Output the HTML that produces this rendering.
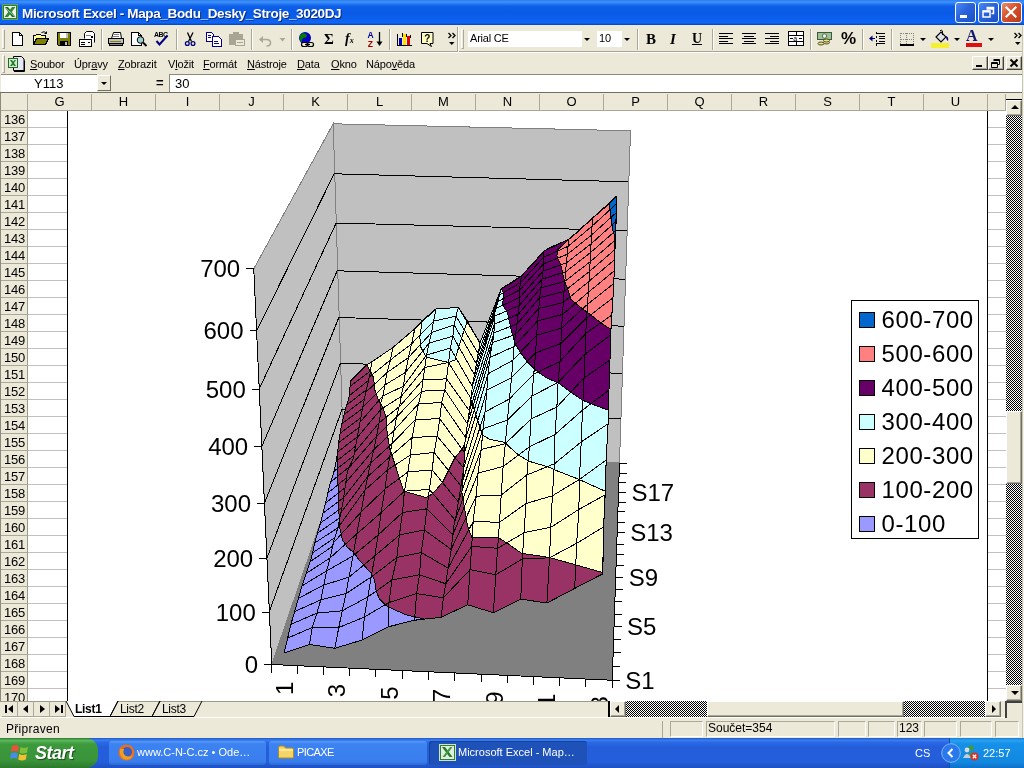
<!DOCTYPE html>
<html lang="cs"><head><meta charset="utf-8"><title>Microsoft Excel - Mapa_Bodu_Desky_Stroje_3020DJ</title>
<style>
html,body{margin:0;padding:0;}
body{width:1024px;height:768px;overflow:hidden;position:relative;background:#ece9d8;font-family:"Liberation Sans","DejaVu Sans",sans-serif;font-size:11px;color:#000;}
div,span{box-sizing:border-box;}
.abs{position:absolute;}
#title{position:absolute;left:0;top:0;width:1024px;height:25px;background:linear-gradient(180deg,#2a7cf0 0%,#3f92fb 8%,#2378f0 16%,#0c5ee8 26%,#0a5ae6 50%,#0c60ee 78%,#1066f5 90%,#0a52d8 96%,#063fb8 100%);}
#title .t{position:absolute;left:22px;top:6px;font-weight:bold;font-size:13.5px;color:#fff;white-space:nowrap;text-shadow:1px 1px 0 #0a2a7a;letter-spacing:-0.36px;}
#tb1{position:absolute;left:0;top:26px;width:1024px;height:26px;background:#ece9d8;border-bottom:1px solid #a8a594;}
#menu{position:absolute;left:0;top:52px;width:1024px;height:23px;background:#ece9d8;border-top:1px solid #fff;}
#menu .m{position:absolute;top:5px;font-size:11px;white-space:nowrap;letter-spacing:-0.15px;}
#fbar{position:absolute;left:0;top:74px;width:1024px;height:18px;background:#ece9d8;}
#colhdr{position:absolute;left:0;top:92px;width:1024px;height:19px;background:#ece9d8;border-top:1px solid #716f64;}
.ch{position:absolute;top:1px;height:17px;width:64px;border-right:1px solid #aca899;border-bottom:1px solid #aca899;text-align:center;font-size:13px;line-height:16px;background:#ece9d8;}
#rowhdr{position:absolute;left:0;top:111px;width:28px;height:590px;overflow:hidden;background:#ece9d8;}
.rh{position:absolute;left:1px;width:27px;height:17px;margin-top:-111px;border-right:1px solid #9d9a8a;border-bottom:1px solid #aca899;padding-left:1px;font-size:13px;line-height:17px;text-align:center;letter-spacing:-0.3px;}
#sheet{position:absolute;left:28px;top:111px;width:978px;height:590px;background:#fff;overflow:hidden;}
.wb{position:absolute;top:2px;width:21px;height:21px;border:1px solid #fff;border-radius:3px;background:linear-gradient(135deg,#4a8af5 0%,#2a63dc 45%,#1c4fc6 100%);}
.wb svg{position:absolute;left:-1px;top:-1px;}
.wb.wc{background:linear-gradient(135deg,#e8906e 0%,#d6502c 45%,#b93a18 100%);}
.grip{position:absolute;top:3px;width:3px;height:20px;border:1px solid;border-color:#fff #aca899 #aca899 #fff;}
.sep{position:absolute;top:3px;width:2px;height:21px;border-left:1px solid #aca899;border-right:1px solid #fff;}
.dd{position:absolute;top:12px;width:0;height:0;border:3px solid transparent;border-top:3px solid #000;border-bottom:none;}
.mdi{position:absolute;top:3px;width:16px;height:14px;background:#ece9d8;border:1px solid;border-color:#fff #404040 #404040 #fff;box-shadow:inset -1px -1px 0 #aca899;}
#vscroll{position:absolute;left:1006px;top:99px;width:16px;height:602px;background:repeating-conic-gradient(#000 0% 25%,#fff 0% 50%) 0 0/2px 2px;}
.dith{background:repeating-conic-gradient(#000 0% 25%,#fff 0% 50%) 0 0/2px 2px;}
.sbtn{position:absolute;width:16px;background:#ece9d8;border:1px solid;border-color:#fff #716f64 #716f64 #fff;box-shadow:inset -1px -1px 0 #aca899;}
#tabbar{position:absolute;left:0;top:701px;width:1024px;height:17px;background:#ece9d8;border-bottom:1px solid #fff;}
.nb{position:absolute;top:0;width:16px;height:16px;border-right:1px solid #aca899;border-bottom:1px solid #aca899;}
#status{position:absolute;left:0;top:719px;width:1024px;height:19px;background:#ece9d8;}
.sb{position:absolute;top:2px;height:16px;border:1px solid;border-color:#aca899 #fff #fff #aca899;font-size:12px;line-height:13px;padding-left:1px;white-space:nowrap;}
#taskbar{position:absolute;left:0;top:738px;width:1024px;height:30px;background:linear-gradient(180deg,#1f55c6 0%,#3a80f0 7%,#2a6ae6 14%,#245edb 30%,#245edb 80%,#1d4fc0 100%);}
#start{position:absolute;left:0;top:0;width:98px;height:30px;border-radius:0 12px 12px 0;background:linear-gradient(180deg,#2e7a2e 0%,#5cb85c 8%,#3c9a3c 20%,#3a933a 75%,#2a7a2a 100%);}
#start span{position:absolute;left:35px;top:4px;color:#fff;font:italic bold 18px "Liberation Sans",sans-serif;line-height:22px;text-shadow:1px 1px 1px #1a4a1a;letter-spacing:-0.5px;}
.tbtn{position:absolute;top:3px;height:24px;border-radius:3px;background:linear-gradient(180deg,#5a9af8 0%,#3c82f0 12%,#3a7eee 85%,#2a68d8 100%);}
.tbtn span{position:absolute;top:5px;color:#fff;font-size:11px;line-height:13px;white-space:nowrap;}
.tbtn.act{background:#1e52b8;box-shadow:inset 1px 1px 1px #16409a;}
#tray{position:absolute;left:949px;top:0;width:75px;height:30px;background:linear-gradient(180deg,#1a80d8 0%,#28a0f0 8%,#1590e8 20%,#1288e0 80%,#0e70c8 100%);border-left:1px solid #0a50a8;}

#root{position:absolute;left:0;top:0;width:1024px;height:768px;will-change:transform;overflow:hidden;}

</style></head>
<body>
<div id="root">
<div id="title">
<svg class="abs" style="left:2px;top:4px" width="16" height="16" viewBox="0 0 16 16"><rect x="0" y="0" width="16" height="16" fill="#2d7d33"/><rect x="0.500" y="0.500" width="15" height="15" fill="none" stroke="#9cc79c" stroke-dasharray="1 1"/><rect x="2" y="2" width="12" height="12" fill="#eef5ea"/><path d="M2.500 3 L6 3 L13.500 13 L10 13 Z" fill="#1d6f27"/><path d="M10 3 L13.500 3 L6 13 L2.500 13 Z" fill="#2f8a3a"/><path d="M3 3.500 L13 12.500" stroke="#cfe6cf" stroke-width="0.800"/></svg>
<span class="t">Microsoft Excel - Mapa_Bodu_Desky_Stroje_3020DJ</span>
<div class="wb" style="left:955px"><svg width="21" height="21"><rect x="5" y="13" width="7" height="3" fill="#fff"/></svg></div>
<div class="wb" style="left:978px"><svg width="21" height="21"><path d="M8.5 5.500 h7 v6 h-2 M8.500 7 h7" stroke="#fff" stroke-width="1.500" fill="none"/><rect x="5" y="9" width="7" height="6" fill="none" stroke="#fff" stroke-width="1.500"/><path d="M5 9.500 h7" stroke="#fff" stroke-width="2"/></svg></div>
<div class="wb wc" style="left:1001px"><svg width="21" height="21"><path d="M5.500 5.500 L14.500 14.500 M14.500 5.500 L5.500 14.500" stroke="#fff" stroke-width="2.200" stroke-linecap="square"/></svg></div>
</div>
<div id="tb1">
<div class="grip" style="left:2px"></div>
<div class="grip" style="left:461px"></div>
<div class="sep" style="left:101px"></div><div class="sep" style="left:176px"></div><div class="sep" style="left:251px"></div><div class="sep" style="left:291px"></div><div class="sep" style="left:389px"></div><div class="sep" style="left:457px;top:1px;height:25px"></div>
<div class="sep" style="left:637px"></div><div class="sep" style="left:712px"></div><div class="sep" style="left:810px"></div><div class="sep" style="left:862px"></div><div class="sep" style="left:891px"></div>
<svg class="abs" style="left:0;top:0" width="1024" height="26" viewBox="0 26 1024 26" shape-rendering="crispEdges">
<!-- new -->
<path d="M12.500 32.500h7l3 3v9.500h-10z" fill="#fff" stroke="#000"/><path d="M19.500 32.500v3h3" fill="none" stroke="#000"/>
<!-- open -->
<path d="M33.500 44.500v-9h2l1-1h4l1 1h4v3" fill="#ffff99" stroke="#000"/><path d="M33.500 44.500l3-6h12l-3 6z" fill="#808000" stroke="#000"/><path d="M41.500 32.500q3-2 5 1m0-2v2h-2" fill="none" stroke="#000" shape-rendering="auto"/>
<!-- save -->
<path d="M57.500 32.500h13v13h-12l-1-1z" fill="#808000" stroke="#000"/><rect x="60" y="33" width="8" height="5" fill="#fff"/><rect x="66" y="33" width="2" height="5" fill="#c0c0c0"/><rect x="60" y="41" width="8" height="4" fill="#000"/><rect x="65" y="42" width="2" height="3" fill="#c0c0c0"/>
<!-- mail -->
<path d="M84.500 38.500v-5l2-2h6l2 2v9" fill="#fff" stroke="#000" shape-rendering="auto"/><rect x="79.500" y="39.500" width="12" height="7" fill="#fff" stroke="#000"/><path d="M81 42h4m-4 2h4m3-2h2" stroke="#000"/><rect x="91" y="36" width="2" height="2" fill="#000"/><path d="M86 35h5" stroke="#808080"/>
<!-- print -->
<path d="M111.500 38.500l2-6h7l1 6" fill="#fff" stroke="#000" shape-rendering="auto"/><path d="M108.500 38.500h15v5h-15z" fill="#c0c0c0" stroke="#000"/><path d="M109.500 43.500h13v2h-13z" fill="#808080" stroke="#000"/><path d="M110 41h11" stroke="#808000"/><path d="M114 34.500h5m-6 2h6" stroke="#808080"/>
<!-- preview -->
<path d="M131.500 32.500h7l3 3v9.500h-10z" fill="#fff" stroke="#000"/><path d="M138.500 32.500v3h3" fill="none" stroke="#000"/><circle cx="140.500" cy="40" r="3.300" fill="#9fd0d0" stroke="#000" shape-rendering="auto"/><path d="M143 42.500l3.500 3.500" stroke="#000" stroke-width="2" shape-rendering="auto"/>
<!-- spell -->
<text x="154" y="37" font-family="Liberation Sans,sans-serif" font-size="7" font-weight="bold" fill="#000" shape-rendering="auto" textLength="14">ABC</text><path d="M156.500 41l3 3.500l8-9" fill="none" stroke="#000080" stroke-width="2" shape-rendering="auto"/>
<!-- cut -->
<g shape-rendering="auto"><path d="M187.500 32.500l4 9M193 32.500l-4.500 9" stroke="#000" stroke-width="1.300" fill="none"/><circle cx="187.300" cy="43.500" r="1.900" fill="none" stroke="#000080" stroke-width="1.300"/><circle cx="193" cy="43.500" r="1.900" fill="none" stroke="#000080" stroke-width="1.300"/></g>
<!-- copy -->
<path d="M206.500 32.500h5l2 2v6.500h-7z" fill="#fff" stroke="#000080"/><path d="M212.500 36.500h6l3 3v6.500h-9z" fill="#fff" stroke="#000080"/><path d="M208 35h3m-3 2h3m3 4h4m-4 2h5" stroke="#000080"/>
<!-- paste (disabled) -->
<path d="M229.500 34.500h13v10h-13z" fill="#a8a595" stroke="#a8a595"/><rect x="233" y="32" width="6" height="3" fill="#a8a595"/><rect x="235.500" y="39.500" width="9" height="6" fill="#ece9d8" stroke="#a8a595"/><path d="M237 42h6" stroke="#a8a595"/>
<!-- undo (disabled) -->
<g shape-rendering="auto"><path d="M261 39.500h5.500q4 0 4 3.500q0 3-4 3" fill="none" stroke="#aca899" stroke-width="1.600"/><path d="M259 39.500l4-3.500v7z" fill="#aca899"/><path d="M279.500 38h6l-3 3.500z" fill="#aca899"/></g>
<!-- hyperlink -->
<g shape-rendering="auto"><circle cx="305" cy="38" r="6" fill="#0000c0"/><path d="M302 33.500q4-1 5 2q-1 3-4 2.500q-2 2-1 4q-2-1-2.500-4q0-3 2.500-4.500z" fill="#008000"/><rect x="301.500" y="42.500" width="6" height="4" rx="2" fill="#ece9d8" stroke="#000" stroke-width="1.200"/><rect x="307.500" y="42.500" width="6" height="4" rx="2" fill="#ece9d8" stroke="#000" stroke-width="1.200"/><path d="M305 44.500h5" stroke="#000" stroke-width="1.200"/></g>
<!-- sort -->
<g shape-rendering="auto"><text x="367.500" y="38" font-family="Liberation Sans,sans-serif" font-size="8.500" font-weight="bold" fill="#0000a0">A</text><text x="367.800" y="46.500" font-family="Liberation Sans,sans-serif" font-size="8.500" font-weight="bold" fill="#a00000">Z</text><path d="M379.500 32v11" stroke="#000" stroke-width="1.300"/><path d="M376.500 41.500h6l-3 4.500z" fill="#000"/></g>
<!-- chart wizard -->
<path d="M397.500 33.500v11.500h14" fill="none" stroke="#000"/><rect x="399" y="38" width="3" height="7" fill="#0000c0"/><rect x="403" y="34" width="3" height="11" fill="#ffe000"/><rect x="407" y="36" width="3" height="9" fill="#e00000"/><path d="M402.500 33v4m4-3v3m4-2v3" stroke="#000"/>
<!-- help -->
<g shape-rendering="auto"><path d="M421.500 32.500h11.500v11h-3l1.500 3l-4.500-3h-5.500z" fill="#ffffc0" stroke="#000"/><text x="424.300" y="42" font-family="Liberation Sans,sans-serif" font-size="10" font-weight="bold" fill="#000">?</text></g>
<!-- chevrons -->
<g shape-rendering="auto"><path d="M448.500 33l2.500 2.500l-2.500 2.500M452.500 33l2.500 2.500l-2.500 2.500" fill="none" stroke="#000" stroke-width="1.300"/><path d="M449 42h5.500l-2.750 3z" fill="#000"/>
<path d="M1014.500 33l2.500 2.500l-2.500 2.500M1018.500 33l2.500 2.500l-2.500 2.500" fill="none" stroke="#000" stroke-width="1.300"/><path d="M1015 42h5.500l-2.750 3z" fill="#000"/></g>
<!-- align -->
<path d="M719 33.500h14m-14 2.500h9m-9 2.500h14m-14 2.500h9m-9 2.500h14" stroke="#000"/>
<path d="M742 33.500h14m-12 2.500h10m-12 2.500h14m-12 2.500h10m-12 2.500h14" stroke="#000"/>
<path d="M765 33.500h14m-9 2.500h9m-14 2.500h14m-9 2.500h9m-14 2.500h14" stroke="#000"/>
<!-- merge -->
<rect x="788.500" y="31.500" width="15" height="14" fill="#fff" stroke="#000"/><path d="M788 35.500h16m-16 6h16M796 31v4m0 7v4" stroke="#000"/><path d="M790 38.500h3m6 0h3" stroke="#000"/><text x="793.300" y="41" font-family="Liberation Sans,sans-serif" font-size="7" fill="#000" shape-rendering="auto">a</text>
<!-- currency -->
<g shape-rendering="auto"><rect x="817.500" y="32.500" width="14" height="7" fill="#9dc09a" stroke="#3a5a3a"/><circle cx="824.500" cy="36" r="2.200" fill="#e8f0e0" stroke="#3a5a3a" stroke-width="0.800"/><ellipse cx="821" cy="43.500" rx="3" ry="1.500" fill="#e8e0a0" stroke="#404000" stroke-width="0.900"/><ellipse cx="826.500" cy="42.500" rx="3" ry="1.500" fill="#e8e0a0" stroke="#404000" stroke-width="0.900"/><ellipse cx="826.500" cy="40.500" rx="3" ry="1.500" fill="#e8e0a0" stroke="#404000" stroke-width="0.900"/></g>
<!-- decrease indent -->
<path d="M876 33.500h9m-6 2.500h6m-6 2.500h6m-6 2.500h6m-9 2.500h9" stroke="#000"/><path d="M876.500 32v2m0 2v2m0 2v2m0 2v2" stroke="#000"/><path d="M869 38.500l3.500-3v6z" fill="#000080" shape-rendering="auto"/><path d="M872 38.500h3" stroke="#000080"/>
<!-- borders -->
<path d="M900.500 33.500h13M900.500 39.500h13M900.500 33v11M906.500 33v11M913.500 33v11" stroke="#808080" stroke-dasharray="1 1"/><path d="M900 45h14" stroke="#000" stroke-width="2"/>
<!-- bucket -->
<g shape-rendering="auto"><path d="M936 37l5-5l5 5l-5 5z" fill="#e0e0e8" stroke="#000" stroke-width="1.100"/><path d="M940 31q1-2 2.500 0v4" fill="none" stroke="#000"/><path d="M946 36q3 1 2 5q-2-1-2-5z" fill="#000080"/></g>
</svg>

<div class="abs" style="left:468px;top:5px;width:114px;height:16px;background:#fff;font-size:11px;line-height:15px;padding-left:2px;letter-spacing:-0.2px">Arial CE</div>
<div class="dd" style="left:584px"></div>
<div class="abs" style="left:597px;top:5px;width:25px;height:16px;background:#fff;font-size:11px;line-height:15px;padding-left:2px">10</div>
<div class="dd" style="left:624px"></div>
<div class="abs" style="left:646px;top:4px;font:bold 15px 'Liberation Serif',serif;line-height:18px">B</div>
<div class="abs" style="left:670px;top:4px;font:italic bold 15px 'Liberation Serif',serif;line-height:18px">I</div>
<div class="abs" style="left:692px;top:4px;font:bold 14px 'Liberation Serif',serif;line-height:17px;border-bottom:1px solid #000;height:15px;">U</div>
<div class="abs" style="left:841px;top:3px;font:bold 17px 'Liberation Sans',sans-serif;line-height:20px;letter-spacing:-1px">%</div>
<div class="abs" style="left:324px;top:3px;font:bold 15px 'Liberation Serif','DejaVu Serif',serif;line-height:20px">&Sigma;</div>
<div class="abs" style="left:345px;top:4px;font:italic bold 14px 'Liberation Serif',serif;line-height:18px">f<span style="font-size:8px">x</span></div>
<div class="dd" style="left:920px"></div><div class="dd" style="left:954px"></div><div class="dd" style="left:988px"></div>
<div class="abs" style="left:931px;top:17px;width:18px;height:5px;background:#f5f032"></div>
<div class="abs" style="left:966px;top:17px;width:16px;height:4px;background:#e01010"></div>
<div class="abs" style="left:966px;top:2px;font:bold 16px 'Liberation Serif',serif;line-height:16px;color:#15156e">A</div>
</div>
<div id="menu">
<div class="grip" style="left:2px;top:2px;height:18px"></div>
<svg class="abs" style="left:8px;top:2px" width="17" height="17" viewBox="0 0 17 17"><path d="M5.500 1.500 h8 l2.500 2.500 v11.500 h-10.500z" fill="#e6e9f5" stroke="#000"/><path d="M6 16.500 h10.500 v-11" stroke="#000" fill="none"/><rect x="0.500" y="3.500" width="9" height="9" fill="#d5ead0" stroke="#1d6b25"/><path d="M2 5 L4 5 L8 11 L6 11Z M6.500 5 L8 5 L4 11 L2 11Z" fill="#1f7a2a"/></svg>
<span class="m" style="left:30px"><u>S</u>oubor</span>
<span class="m" style="left:74px">Úpr<u>a</u>vy</span>
<span class="m" style="left:118px"><u>Z</u>obrazit</span>
<span class="m" style="left:168px">V<u>l</u>ožit</span>
<span class="m" style="left:203px"><u>F</u>ormát</span>
<span class="m" style="left:247px"><u>N</u>ástroje</span>
<span class="m" style="left:297px"><u>D</u>ata</span>
<span class="m" style="left:331px"><u>O</u>kno</span>
<span class="m" style="left:366px">Nápo<u>v</u>ěda</span>
<div class="mdi" style="left:972px"><svg width="14" height="12"><rect x="3" y="8" width="6" height="2" fill="#000"/></svg></div>
<div class="mdi" style="left:988px"><svg width="14" height="12"><path d="M4.500 2.500 h6 v5 h-2 M4.500 3.500 h6" stroke="#000" fill="none"/><path d="M2.500 5.500 h6 v5 h-6z M2.500 6.500 h6" stroke="#000" fill="none"/></svg></div>
<div class="mdi" style="left:1006px"><svg width="14" height="12"><path d="M3.500 2.500 L10.500 9.500 M10.500 2.500 L3.500 9.500" stroke="#000" stroke-width="2"/></svg></div>
</div>
<div id="fbar">
<div class="abs" style="left:1px;top:0;width:96px;height:18px;background:#fff;border-top:1px solid #8d8a7c;font-size:13px;line-height:18px;padding-left:33px;">Y113</div>
<div class="abs" style="left:97px;top:1px;width:14px;height:16px;background:#ece9d8;border:1px solid;border-color:#fff #716f64 #716f64 #fff;"><div class="abs" style="left:3px;top:6px;border:3px solid transparent;border-top:3px solid #000;border-bottom:none;width:0;height:0"></div></div>
<div class="abs" style="left:156px;top:0;font:bold 13px 'Liberation Sans',sans-serif;line-height:17px">=</div>
<div class="abs" style="left:169px;top:0;width:855px;height:18px;background:#fff;border-top:1px solid #8d8a7c;border-left:1px solid #8d8a7c;font-size:13px;line-height:18px;padding-left:5px;">30</div>
</div>
<div id="colhdr"><div class="ch" style="left:28px">G</div><div class="ch" style="left:92px">H</div><div class="ch" style="left:156px">I</div><div class="ch" style="left:220px">J</div><div class="ch" style="left:284px">K</div><div class="ch" style="left:348px">L</div><div class="ch" style="left:412px">M</div><div class="ch" style="left:476px">N</div><div class="ch" style="left:540px">O</div><div class="ch" style="left:604px">P</div><div class="ch" style="left:668px">Q</div><div class="ch" style="left:732px">R</div><div class="ch" style="left:796px">S</div><div class="ch" style="left:860px">T</div><div class="ch" style="left:924px">U</div><div class="ch" style="left:988px;width:18px"></div><div class="ch" style="left:1px;width:27px"></div></div><div id="rowhdr"><div class="rh" style="top:111px">136</div><div class="rh" style="top:128px">137</div><div class="rh" style="top:145px">138</div><div class="rh" style="top:162px">139</div><div class="rh" style="top:179px">140</div><div class="rh" style="top:196px">141</div><div class="rh" style="top:213px">142</div><div class="rh" style="top:230px">143</div><div class="rh" style="top:247px">144</div><div class="rh" style="top:264px">145</div><div class="rh" style="top:281px">146</div><div class="rh" style="top:298px">147</div><div class="rh" style="top:315px">148</div><div class="rh" style="top:332px">149</div><div class="rh" style="top:349px">150</div><div class="rh" style="top:366px">151</div><div class="rh" style="top:383px">152</div><div class="rh" style="top:400px">153</div><div class="rh" style="top:417px">154</div><div class="rh" style="top:434px">155</div><div class="rh" style="top:451px">156</div><div class="rh" style="top:468px">157</div><div class="rh" style="top:485px">158</div><div class="rh" style="top:502px">159</div><div class="rh" style="top:519px">160</div><div class="rh" style="top:536px">161</div><div class="rh" style="top:553px">162</div><div class="rh" style="top:570px">163</div><div class="rh" style="top:587px">164</div><div class="rh" style="top:604px">165</div><div class="rh" style="top:621px">166</div><div class="rh" style="top:638px">167</div><div class="rh" style="top:655px">168</div><div class="rh" style="top:672px">169</div><div class="rh" style="top:689px">170</div></div><div class="abs" style="left:0;top:93px;width:1px;height:608px;background:#8d8a7c"></div><div id="sheet">
<div class="abs" style="left:0;top:0;width:39px;height:590px;background:repeating-linear-gradient(180deg,#fff 0,#fff 16px,#c0c0c0 16px,#c0c0c0 17px);"></div>
<div class="abs" style="left:960px;top:0;width:18px;height:590px;background:repeating-linear-gradient(180deg,#fff 0,#fff 16px,#c0c0c0 16px,#c0c0c0 17px);"></div>
<div class="abs" style="left:39px;top:0;width:921px;height:590px;background:#fff;border-left:1px solid #000;border-right:1px solid #000;"></div>
</div>
<div id="vscroll">
<div class="abs" style="left:0;top:0;width:16px;height:1px;background:#000"></div>
<div class="sbtn" style="left:0;top:1px;height:16px"><div class="abs" style="left:4px;top:4px;border:4px solid transparent;border-bottom:4px solid #000;border-top:none;width:0;height:0"></div></div>
<div class="sbtn" style="left:0;top:312px;height:73px"></div>
<div class="sbtn" style="left:0;top:586px;height:16px"><div class="abs" style="left:4px;top:5px;border:4px solid transparent;border-top:4px solid #000;border-bottom:none;width:0;height:0"></div></div>
</div>
<svg id="chart" width="1024" height="768" viewBox="0 0 1024 768" style="position:absolute;left:0;top:0;will-change:transform">
<defs><clipPath id="cs"><rect x="68" y="111" width="919" height="590"/></clipPath></defs>
<g clip-path="url(#cs)" shape-rendering="crispEdges" font-family="Liberation Sans, Arial, sans-serif" font-size="24" fill="#000">
<polygon points="271.8,664.5 612.2,680.2 619.5,463.0 343.5,455.0" fill="#808080"/>
<polygon points="333.2,123.8 630.5,130.8 619.5,463.0 343.5,455.0" fill="#c0c0c0" stroke="#808080" stroke-width="1"/>
<polygon points="333.2,123.8 253.8,268.8 271.8,664.5 343.5,455.0" fill="#c0c0c0" stroke="#808080" stroke-width="1"/>
<path d="M257.0 330.2L334.2 173.8L628.5 181.8M259.2 389.0L336.2 223.0L626.8 230.5M261.8 446.5L337.2 270.8L625.2 279.2M264.5 503.2L338.8 317.5L623.8 326.2M266.8 558.5L340.5 363.2L622.0 373.4M269.2 612.0L342.0 409.5L620.5 419.0" fill="none" stroke="#000" stroke-width="1"/>
<path d="M253.750 268.750L271.750 664.500" stroke="#000" stroke-width="1" fill="none"/>
<text x="240.2" y="277.4" text-anchor="end">700</text>
<text x="243.5" y="338.9" text-anchor="end">600</text>
<text x="245.8" y="397.7" text-anchor="end">500</text>
<text x="248.2" y="455.2" text-anchor="end">400</text>
<text x="251.0" y="511.9" text-anchor="end">300</text>
<text x="253.2" y="567.2" text-anchor="end">200</text>
<text x="255.8" y="620.7" text-anchor="end">100</text>
<text x="258.2" y="673.2" text-anchor="end">0</text>
<path d="M246.2 268.8H253.8M249.5 330.2H257.0M251.8 389.0H259.2M254.2 446.5H261.8M257.0 503.2H264.5M259.2 558.5H266.8M261.8 612.0H269.2M264.2 664.5H271.8" stroke="#000" stroke-width="1" fill="none"/>
<polygon points="284.1,653.0 309.4,644.4 334.8,648.3 362.2,640.0 388.0,626.9 414.5,620.2 441.1,617.3 467.7,604.8 493.4,612.7 520.8,599.1 546.9,603.0 574.7,588.4 602.8,573.8 603.6,526.9 605.2,494.8 606.2,460.0 608.1,423.8 609.0,390.0 610.0,360.0 610.6,335.0 611.9,315.0 612.9,298.0 613.8,283.5 614.1,271.0 614.4,259.8 615.0,249.5 615.5,239.8 615.8,230.5 616.0,221.5 616.2,212.7 616.3,204.0 616.5,196.4 616.2,196.2 609.4,203.8 592.5,218.1 580.0,230.0 568.8,239.4 550.0,247.5 544.0,251.0 533.0,264.0 521.4,276.0 512.5,282.5 501.2,288.8 480.0,343.0 473.8,332.5 467.5,321.2 458.3,307.5 436.0,308.8 422.2,320.6 414.8,328.8 392.9,347.5 371.6,361.9 366.6,365.0 350.4,381.2 349.4,396.0 345.5,409.0 341.6,424.7 339.0,440.3 337.4,454.0 334.5,470.0 329.6,485.3 325.7,502.5 321.0,521.2 315.5,540.0 310.8,560.0 302.0,586.0 291.0,624.0 284.1,653.0" fill="#993366" stroke="#000" stroke-width="1" stroke-linejoin="round"/>
<polygon points="337.4,455.0 334.5,470.0 329.6,485.3 325.7,502.5 321.0,521.2 315.5,540.0 310.8,560.0 302.0,586.0 291.0,624.0 284.1,653.0 309.4,644.4 334.8,648.3 362.2,640.0 388.0,626.9 414.5,620.2 425.0,619.3 406.0,614.7 395.0,610.0 385.6,605.3 379.4,599.0 376.2,591.2 374.7,580.3 371.6,574.0 363.8,565.0 360.0,561.2 353.8,552.5 347.5,547.5 342.5,540.0 339.4,526.2 338.8,507.5 338.1,486.2 337.5,470.0" fill="#9999ff" stroke="#000" stroke-width="1" stroke-linejoin="round"/>
<polygon points="366.6,365.0 369.8,370.0 373.5,377.5 374.8,390.0 378.5,400.0 383.5,408.8 386.0,417.5 387.2,433.8 389.8,448.8 393.5,460.0 397.2,471.2 403.8,491.2 426.2,497.5 432.5,493.8 442.5,482.5 448.8,470.0 455.0,457.5 462.5,448.8 465.0,442.5 466.9,427.5 470.6,402.5 475.0,372.5 480.0,343.0 473.8,332.5 467.5,321.2 458.3,307.5 436.0,308.8 422.2,320.6 414.8,328.8 392.9,347.5 371.6,361.9" fill="#ffffcc" stroke="#000" stroke-width="1" stroke-linejoin="round"/>
<polygon points="422.2,320.6 436.0,308.8 458.3,307.5 467.5,321.2 462.5,335.0 457.5,351.2 455.0,360.0 448.5,362.5 426.0,357.0 421.0,347.5 419.8,337.5" fill="#ccffff" stroke="#000" stroke-width="1" stroke-linejoin="round"/>
<polygon points="465.0,442.5 463.8,467.5 461.9,492.5 465.0,511.2 467.5,526.0 471.7,537.1 498.5,537.7 507.7,543.5 521.5,553.3 549.5,557.5 602.7,572.5 603.6,526.9 605.2,491.2 577.5,478.8 555.0,470.0 550.0,467.5 528.8,461.2 518.5,455.0 510.0,447.5 505.0,442.5 490.0,439.4 482.5,435.0 470.9,400.0 468.8,416.0 466.9,428.0 466.2,436.0" fill="#ffffcc" stroke="#000" stroke-width="1" stroke-linejoin="round"/>
<polygon points="482.5,435.0 490.0,439.4 505.0,442.5 510.0,447.5 518.5,455.0 528.8,461.2 550.0,467.5 555.0,470.0 577.5,478.8 605.2,491.2 606.2,460.0 608.1,423.8 608.3,410.2 595.0,405.2 582.5,400.2 570.0,391.5 558.1,382.8 546.2,377.8 535.6,370.2 527.5,362.0 520.0,352.0 515.0,343.2 511.2,330.0 507.5,312.5 502.5,305.0 503.8,293.8 501.2,288.8 480.0,343.0 477.5,357.5 475.0,372.5 472.5,385.0 470.9,400.0" fill="#ccffff" stroke="#000" stroke-width="1" stroke-linejoin="round"/>
<polygon points="608.3,410.2 595.0,405.2 582.5,400.2 570.0,391.5 558.1,382.8 546.2,377.8 535.6,370.2 527.5,362.0 520.0,352.0 515.0,343.2 511.2,330.0 507.5,312.5 502.5,305.0 503.8,293.8 501.2,288.8 512.5,282.5 521.4,276.0 533.0,264.0 544.0,251.0 550.0,247.5 568.8,239.4 557.5,250.0 556.9,256.0 561.2,266.2 563.0,275.0 565.2,283.0 567.5,288.0 570.6,299.0 579.0,306.0 594.0,317.5 602.5,324.0 611.0,329.5 610.0,360.0 609.0,390.0" fill="#660066" stroke="#000" stroke-width="1" stroke-linejoin="round"/>
<polygon points="611.0,329.5 602.5,324.0 594.0,317.5 579.0,306.0 570.6,299.0 567.5,288.0 565.2,283.0 563.0,275.0 561.2,266.2 556.9,256.0 557.5,250.0 568.8,239.4 580.0,230.0 592.5,218.1 609.4,203.8 610.6,215.0 612.5,228.8 615.0,237.5 614.4,260.0 613.8,286.0 612.8,300.0" fill="#ff8080" stroke="#000" stroke-width="1" stroke-linejoin="round"/>
<polygon points="616.2,196.2 609.4,203.8 610.6,215.0 612.5,228.8 615.0,237.5 615.8,230.0 616.9,200.0" fill="#0066cc" stroke="#000" stroke-width="1" stroke-linejoin="round"/>
<path d="M284.1 653.0L291.0 624.0L302.0 586.0L310.8 560.0L315.5 540.0L321.0 521.2L325.7 502.5L329.6 485.3L334.5 470.0L337.4 454.0L339.0 440.3L341.6 424.7L345.5 409.0L349.4 396.0L350.4 381.2M309.4 644.4L312.2 627.5L316.9 613.1L320.8 599.8L323.9 585.0L326.6 570.9L329.6 560.0L334.0 540.0L338.0 527.5L343.0 502.5L347.5 471.0L353.3 458.5L357.2 437.7L361.2 415.6L365.0 396.0L370.3 372.6L371.6 361.9M334.8 648.3L338.8 627.5L342.2 610.8L346.1 593.6L348.9 577.2L351.2 566.0L353.8 551.2L357.5 530.0L361.2 511.2L365.0 490.0L369.0 470.0L374.2 448.0L378.0 428.6L380.7 413.0L381.0 402.4L383.5 393.5L385.6 380.0L387.2 372.5L390.4 360.0L392.9 347.5M362.2 640.0L364.5 615.9L367.7 597.5L370.8 579.5L373.1 566.0L375.0 555.0L378.1 535.0L381.2 512.5L385.0 488.8L387.5 470.0L391.6 445.0L394.2 430.3L396.5 417.0L400.0 403.7L402.0 392.0L403.5 386.2L405.4 372.5L408.5 357.5L411.6 343.8L414.8 328.8M388.0 626.9L389.0 602.5L391.9 580.0L396.9 557.5L399.4 535.0L402.5 512.5L404.4 491.2L407.9 471.9L410.4 455.0L412.2 437.5L415.4 419.4L418.5 403.8L421.6 391.2L422.9 380.0L424.8 367.5L426.6 355.0L429.1 343.1L431.6 332.5L433.5 321.2L436.0 308.8M414.5 620.2L416.6 593.6L419.5 574.8L421.2 552.5L424.4 530.0L426.9 508.8L429.4 489.4L432.2 470.0L434.1 452.5L437.2 436.2L439.8 418.8L441.6 402.5L444.8 390.0L446.6 378.8L448.5 362.5L450.4 348.1L452.9 336.2L454.1 325.0L456.0 316.2L458.3 307.5M441.1 617.3L443.4 597.8L445.8 583.8L448.1 568.1L451.2 549.4L453.8 526.0L456.2 515.0L460.0 492.5L463.8 467.5L465.0 442.5L466.2 436.0L466.9 427.5L468.8 416.2L470.6 402.5L472.5 385.0L475.0 372.5L477.5 357.5L480.0 343.0M467.7 604.8L470.0 569.7L471.7 546.4L473.2 521.0L476.2 496.2L478.1 473.1L481.2 449.4L483.1 428.8L485.0 412.0L486.9 390.0L488.1 373.8L490.0 357.5L492.5 342.5L493.8 335.0L495.0 312.5L501.2 288.8M493.4 612.7L495.8 574.7L497.6 548.3L499.5 522.3L501.2 495.0L503.1 466.5L505.3 443.8L507.5 420.0L509.4 399.0L511.5 377.8L513.0 360.2L514.0 346.5L515.5 334.6L517.5 320.0L519.8 300.0L520.0 286.2L521.4 276.0M520.8 599.1L522.3 559.0L524.0 532.7L526.0 503.5L526.9 475.0L529.4 446.9L531.0 419.0L531.9 396.0L533.8 374.0L535.6 352.8L537.5 322.5L540.0 295.0L543.1 270.0L544.0 251.0M546.9 603.0L549.5 557.8L550.8 527.3L552.4 495.8L554.4 463.8L555.0 434.4L556.9 407.0L558.1 382.5L560.0 361.5L561.9 324.0L564.4 286.0L566.2 265.0L568.8 239.4M574.7 588.4L576.7 543.3L578.9 509.4L579.4 479.5L581.2 441.9L582.5 410.2L584.4 371.5L586.2 324.0L588.8 286.0L590.6 252.5L592.5 218.1M602.8 573.8L603.6 526.9L605.2 494.8L606.2 460.0L608.1 423.8L609.0 390.0L610.0 360.0L610.6 335.0L612.8 300.0L613.8 286.0L614.4 260.0L615.6 237.5L616.5 197.0M309.4 644.4L334.8 648.3L362.2 640.0L388.0 626.9L414.5 620.2L441.1 617.3L467.7 604.8L493.4 612.7L520.8 599.1L546.9 603.0L574.7 588.4L602.8 573.8M312.2 627.5L338.8 627.5L364.4 617.0L389.0 602.5L416.6 593.6L443.4 597.8L470.0 569.7L495.8 574.7L522.3 559.0L549.5 557.8L576.7 543.3L603.6 526.9M316.9 613.1L342.2 610.8L367.8 597.0L391.9 580.0L419.5 574.8L445.8 583.8L471.7 546.4L497.6 548.3L524.0 532.7L550.8 527.3L578.9 509.4L605.2 494.8M320.8 599.8L346.1 593.6L371.2 577.0L396.9 557.5L421.2 552.5L448.1 568.1L473.2 521.5L499.5 522.3L526.0 503.5L552.4 495.8L579.4 479.5L606.2 460.0M323.9 585.0L348.9 577.2L374.8 556.0L399.4 535.0L424.4 530.0L451.2 549.4L476.2 496.2L501.2 495.0L526.9 475.0L554.4 463.8L581.2 441.9L608.1 423.8M326.6 570.9L352.9 556.0L378.1 535.0L402.5 512.5L426.9 508.8L452.8 535.0L478.1 473.1L503.1 466.5L529.4 446.9L555.0 434.4L582.5 410.2L609.0 390.0M330.0 558.0L356.8 534.0L381.2 512.5L404.4 491.2L429.4 489.4L455.1 520.0L481.2 449.4L505.3 443.8L531.0 419.0L556.9 407.0L584.1 377.8L610.0 360.0M333.4 542.9L361.1 512.0L385.0 489.0L407.9 471.9L432.2 470.0L458.4 502.0L483.1 428.8L507.5 420.0L531.9 396.0L558.1 382.5L585.1 354.0L610.6 335.0M337.9 527.8L365.0 490.0L387.5 470.0L410.4 455.0L434.1 452.5L461.0 486.0L485.0 412.0L509.4 399.0L533.8 374.0L560.0 361.5L585.9 333.3L611.9 315.0M340.9 512.8L367.7 476.6L389.6 457.0L412.2 437.5L437.2 436.2L463.7 468.0L486.9 390.0L511.5 377.8L535.6 352.8L560.9 343.5L586.7 317.8L612.9 298.0M343.7 497.7L370.6 463.1L391.8 444.0L415.4 419.4L439.8 418.8L464.5 452.5L488.1 373.8L513.0 360.2L536.7 335.2L561.7 328.0L587.5 304.3L613.8 283.5M345.8 482.6L373.8 449.7L394.2 430.3L418.5 403.8L441.6 402.5L465.9 438.0L490.0 357.5L514.0 346.5L537.7 320.8L562.5 314.5L588.3 292.3L614.1 271.0M349.1 467.5L376.5 436.3L396.5 417.0L421.6 391.2L444.8 390.0L467.5 424.0L492.5 342.5L515.5 334.6L538.8 308.4L563.3 302.5L589.0 281.3L614.4 259.8M354.5 452.4L379.0 422.9L399.2 406.8L422.9 380.0L446.6 378.8L469.5 411.0L493.9 332.9L517.0 324.0L539.8 297.6L564.0 291.5L589.6 271.3L615.0 249.5M357.3 437.4L380.8 409.4L401.2 396.5L424.8 367.5L448.5 362.5L471.0 398.5L494.4 324.1L518.1 314.4L540.9 287.9L564.8 281.3L590.1 261.9L615.5 239.8M360.0 422.3L382.8 396.0L403.5 386.2L426.6 355.0L450.4 348.1L472.3 386.5L494.8 316.0L519.2 305.5L542.0 279.1L565.7 271.8L590.6 252.5L615.8 230.5M362.8 407.2L384.8 385.0L405.4 372.5L429.1 343.1L452.9 336.2L474.5 375.0L496.1 308.5L519.8 297.3L543.0 271.1L566.5 262.8L591.1 243.8L616.0 221.5M365.9 392.1L387.2 372.5L408.5 357.5L431.6 332.5L454.1 325.0L476.4 364.0L497.9 301.5L519.9 289.7L543.4 263.9L567.3 254.3L591.6 235.0L616.2 212.7M369.3 377.0L390.4 360.0L411.6 343.8L433.5 321.2L456.0 316.2L478.2 353.5L499.6 294.9L520.5 282.6L543.7 257.1L568.1 246.3L592.0 226.2L616.3 204.0M371.6 362.0L392.9 347.5L414.8 328.8L436.0 308.8L458.3 307.5L480.0 343.0L501.2 288.8L521.4 276.0L544.0 251.0L568.8 239.4L592.5 218.1L616.5 196.4M284.1 653.0L309.4 644.4M287.6 638.1L312.2 627.5M290.9 624.4L316.9 613.1M294.6 611.6L320.8 599.8M298.4 598.3L323.9 585.0M302.1 585.8L326.6 570.9M306.3 573.3L330.0 558.0M310.3 561.6L332.6 546.3M312.4 553.0L334.7 537.7M314.8 543.0L337.9 527.7M317.6 533.0L340.0 517.7M320.5 523.0L342.0 507.7M323.1 513.0L343.7 497.7M325.6 503.0L345.1 487.7M327.9 493.0L346.5 477.7M330.7 482.0L349.5 466.7M334.2 471.0L353.8 455.7M336.0 461.5L355.6 446.2M337.6 452.0L357.4 436.7M338.7 442.6L359.1 427.3M340.2 433.2L360.8 417.9M341.8 423.8L362.6 408.5M344.2 414.4L364.4 399.1M346.7 405.0L366.4 389.7M349.4 395.6L368.6 380.3M350.1 386.2L370.5 370.9" fill="none" stroke="#000" stroke-width="1" stroke-linejoin="round" shape-rendering="crispEdges"/>
<path d="M271.750 664.500L612.250 680.250M271.1 664.5v8M297.1 665.7v8M323.1 666.9v8M349.0 668.1v8M375.8 669.3v8M402.1 670.5v8M428.8 671.8v8M454.8 673.0v8M481.5 674.2v8M507.9 675.4v8M533.8 676.6v8M559.8 677.8v8M585.8 679.0v8M612.5 680.3v8" stroke="#000" stroke-width="1" fill="none"/>
<text transform="translate(292.6 681.6) rotate(-90)" text-anchor="end">1</text>
<text transform="translate(344.6 684.0) rotate(-90)" text-anchor="end">3</text>
<text transform="translate(397.5 686.4) rotate(-90)" text-anchor="end">5</text>
<text transform="translate(450.3 688.9) rotate(-90)" text-anchor="end">7</text>
<text transform="translate(503.2 691.3) rotate(-90)" text-anchor="end">9</text>
<text transform="translate(555.3 693.7) rotate(-90)" text-anchor="end">11</text>
<text transform="translate(607.6 696.1) rotate(-90)" text-anchor="end">13</text>
<path d="M619.500 463L612.250 680.250M619.5 463.5h7.5M619.2 473.0h7.5M618.8 482.5h7.5M618.5 492.4h7.5M618.2 502.0h7.5M617.9 511.8h7.5M617.5 522.0h7.5M617.2 532.6h7.5M616.8 544.0h7.5M616.4 554.9h7.5M616.1 565.6h7.5M615.7 577.7h7.5M615.3 589.4h7.5M614.9 601.8h7.5M614.4 614.5h7.5M614.0 626.9h7.5M613.6 639.6h7.5M613.2 652.6h7.5M612.7 666.6h7.5M612.2 680.4h7.5" stroke="#000" stroke-width="1" fill="none"/>
<text x="631.5" y="500.7">S17</text>
<text x="630.2" y="540.9">S13</text>
<text x="628.7" y="586.0">S9</text>
<text x="627.0" y="635.2">S5</text>
<text x="625.2" y="688.7">S1</text>
<rect x="851.500" y="300.500" width="127" height="238" fill="#fff" stroke="#000" stroke-width="1"/>
<rect x="859.500" y="312.5" width="15" height="15" fill="#0066cc" stroke="#000" stroke-width="1"/>
<text x="881.500" y="328" letter-spacing="0.6">600-700</text>
<rect x="859.500" y="346.5" width="15" height="15" fill="#ff8080" stroke="#000" stroke-width="1"/>
<text x="881.500" y="362" letter-spacing="0.6">500-600</text>
<rect x="859.500" y="380.5" width="15" height="15" fill="#660066" stroke="#000" stroke-width="1"/>
<text x="881.500" y="396" letter-spacing="0.6">400-500</text>
<rect x="859.500" y="414.5" width="15" height="15" fill="#ccffff" stroke="#000" stroke-width="1"/>
<text x="881.500" y="430" letter-spacing="0.6">300-400</text>
<rect x="859.500" y="448.5" width="15" height="15" fill="#ffffcc" stroke="#000" stroke-width="1"/>
<text x="881.500" y="464" letter-spacing="0.6">200-300</text>
<rect x="859.500" y="482.5" width="15" height="15" fill="#993366" stroke="#000" stroke-width="1"/>
<text x="881.500" y="498" letter-spacing="0.6">100-200</text>
<rect x="859.500" y="516.5" width="15" height="15" fill="#9999ff" stroke="#000" stroke-width="1"/>
<text x="881.500" y="532" letter-spacing="0.6">0-100</text>
</g></svg><div id="tabbar">
<div class="abs" style="left:0;top:0;width:608px;height:1px;background:#9d9a8a"></div>
<div class="nb" style="left:2px"><svg width="16" height="16"><path d="M4 4v8" stroke="#000" stroke-width="2"/><path d="M11 4v8l-5-4z" fill="#000"/></svg></div>
<div class="nb" style="left:18px"><svg width="16" height="16"><path d="M10 4v8l-5-4z" fill="#000"/></svg></div>
<div class="nb" style="left:34px"><svg width="16" height="16"><path d="M6 4v8l5-4z" fill="#000"/></svg></div>
<div class="nb" style="left:50px"><svg width="16" height="16"><path d="M12 4v8" stroke="#000" stroke-width="2"/><path d="M5 4v8l5-4z" fill="#000"/></svg></div>
<svg class="abs" style="left:64px;top:0" width="150" height="17"><path d="M0 0 H54 L46 15.500 H10 L2 0Z" fill="#fff"/><path d="M2 0 L10 15.500 H46 L54 0 M46 15.500 H88 L96 0 M54 0 L46 15.500 M88 15.500 H130 L138 0 M96 0 L88 15.500" fill="none" stroke="#000" stroke-width="1"/></svg>
<span class="abs" style="left:75px;top:1px;font-weight:bold;font-size:12px;line-height:14px;letter-spacing:-0.3px">List1</span>
<span class="abs" style="left:120px;top:1px;font-size:12px;line-height:14px;letter-spacing:-0.3px">List2</span>
<span class="abs" style="left:162px;top:1px;font-size:12px;line-height:14px;letter-spacing:-0.3px">List3</span>
<div class="abs" style="left:608px;top:0;width:2px;height:16px;background:#000"></div>
<div class="abs dith" style="left:610px;top:0;width:391px;height:16px"></div>
<div class="sbtn" style="left:610px;top:0;width:16px;height:16px"><div class="abs" style="left:4px;top:3px;border:4px solid transparent;border-right:4px solid #000;border-left:none;width:0;height:0"></div></div>
<div class="sbtn" style="left:707px;top:0;width:197px;height:16px"></div>
<div class="sbtn" style="left:985px;top:0;width:16px;height:16px"><div class="abs" style="left:6px;top:3px;border:4px solid transparent;border-left:4px solid #000;border-right:none;width:0;height:0"></div></div>
<div class="abs" style="left:1005px;top:0;width:18px;height:17px;border-left:2px solid #404040;border-top:2px solid #404040;background:#ece9d8"></div>
</div>
<div id="status">
<span class="abs" style="left:6px;top:3px;font-size:12px;line-height:14px;letter-spacing:0.3px">Připraven</span>
<div class="abs" style="left:662px;top:2px;width:1px;height:17px;background:#aca899"></div>
<div class="sb" style="left:670px;width:33px"></div>
<div class="sb" style="left:706px;width:129px">Součet=354</div>
<div class="sb" style="left:838px;width:28px"></div>
<div class="sb" style="left:868px;width:27px"></div>
<div class="sb" style="left:897px;width:25px">123</div>
<div class="sb" style="left:924px;width:33px"></div>
<div class="sb" style="left:960px;width:32px"></div>
<div class="sb" style="left:995px;width:24px"></div>
</div>
<div id="taskbar">
<div id="start"><svg class="abs" style="left:10px;top:5px" width="20" height="20" viewBox="0 0 20 20"><path d="M2 3 Q5.500 1 9 3.500 L8 9 Q5 7 1 9Z" fill="#e8523a"/><path d="M10.500 4 Q14 6 18 4 L17 9.500 Q13 11.500 9.500 9.500Z" fill="#7cc03c"/><path d="M0.800 10.500 Q4.500 8.500 7.800 10.500 L6.800 16 Q3.500 14 0 16Z" fill="#4a8ae8"/><path d="M9.200 11 Q13 13 16.800 11 L15.800 16.500 Q12 18.500 8.200 16.500Z" fill="#f4c030"/></svg><span>Start</span></div>
<div class="tbtn" style="left:109px;width:157px"><svg class="abs" style="left:9px;top:3px" width="17" height="17" viewBox="0 0 17 17"><circle cx="8.500" cy="8.500" r="8" fill="#e8701a"/><circle cx="9" cy="8" r="5" fill="#3a5fc8"/><path d="M2 5 Q1 12 6 15 Q12 17 15 11 Q12 14 8 12 Q4 10 6 5Z" fill="#f0a020"/></svg><span style="left:28px">www.C-N-C.cz &bull; Ode&hellip;</span></div>
<div class="tbtn" style="left:269px;width:158px"><svg class="abs" style="left:9px;top:4px" width="16" height="14" viewBox="0 0 16 14"><path d="M0.500 2.500 Q0.500 1 2 1 H6 L7.500 3 H14 Q15.500 3 15.500 4.500 V12 Q15.500 13 14.500 13 H1.500 Q0.500 13 0.500 12Z" fill="#f4d668" stroke="#b08a20"/><path d="M1 5 H15" stroke="#fbeeb0" stroke-width="1.500"/></svg><span style="left:28px;letter-spacing:-0.6px">PICAXE</span></div>
<div class="tbtn act" style="left:429px;width:158px"><svg class="abs" style="left:10px;top:3px" width="17" height="17" viewBox="0 0 17 17"><rect x="0.500" y="0.500" width="16" height="16" fill="#2f7d32" stroke="#cfe3c8"/><rect x="2" y="2" width="13" height="13" fill="#dfeedd"/><path d="M3 3 L6 3 L13.500 13 L10.500 13 Z" fill="#1f7a2a"/><path d="M11 3 L13.500 3 L6 13 L3.500 13 Z" fill="#3c9a45"/></svg><span style="left:29px">Microsoft Excel - Map&hellip;</span></div>
<span class="abs" style="left:915px;top:9px;color:#fff;font-size:11px;line-height:13px;">CS</span>
<div id="tray">
<svg class="abs" style="left:-9px;top:5px" width="20" height="20"><circle cx="10" cy="10" r="9.300" fill="#2a78ec" stroke="#7fb6fa" stroke-width="1"/><path d="M11.500 6 L7.500 10 L11.500 14" stroke="#fff" stroke-width="2" fill="none"/></svg>
<svg class="abs" style="left:12px;top:6px" width="18" height="18"><circle cx="9" cy="4" r="2.800" fill="#3a9a4a"/><path d="M4 13 Q9 4 14 13Z" fill="#3a9a4a"/><circle cx="5" cy="6" r="2.400" fill="#d8dce8"/><path d="M1 14 Q5 6 9 14Z" fill="#c8cce0"/><circle cx="12.500" cy="12.500" r="4" fill="#d83020"/><path d="M10.800 10.800l3.400 3.400m0-3.400l-3.400 3.400" stroke="#fff" stroke-width="1.300"/></svg>
<span class="abs" style="left:33px;top:9px;color:#fff;font-size:11px;line-height:13px;">22:57</span>
</div>
</div>

<div class="abs" style="left:1022px;top:26px;width:1px;height:712px;background:#c9c6b6"></div><div class="abs" style="left:1023px;top:26px;width:1px;height:712px;background:#f4f3ea"></div>
</div>
</body></html>
